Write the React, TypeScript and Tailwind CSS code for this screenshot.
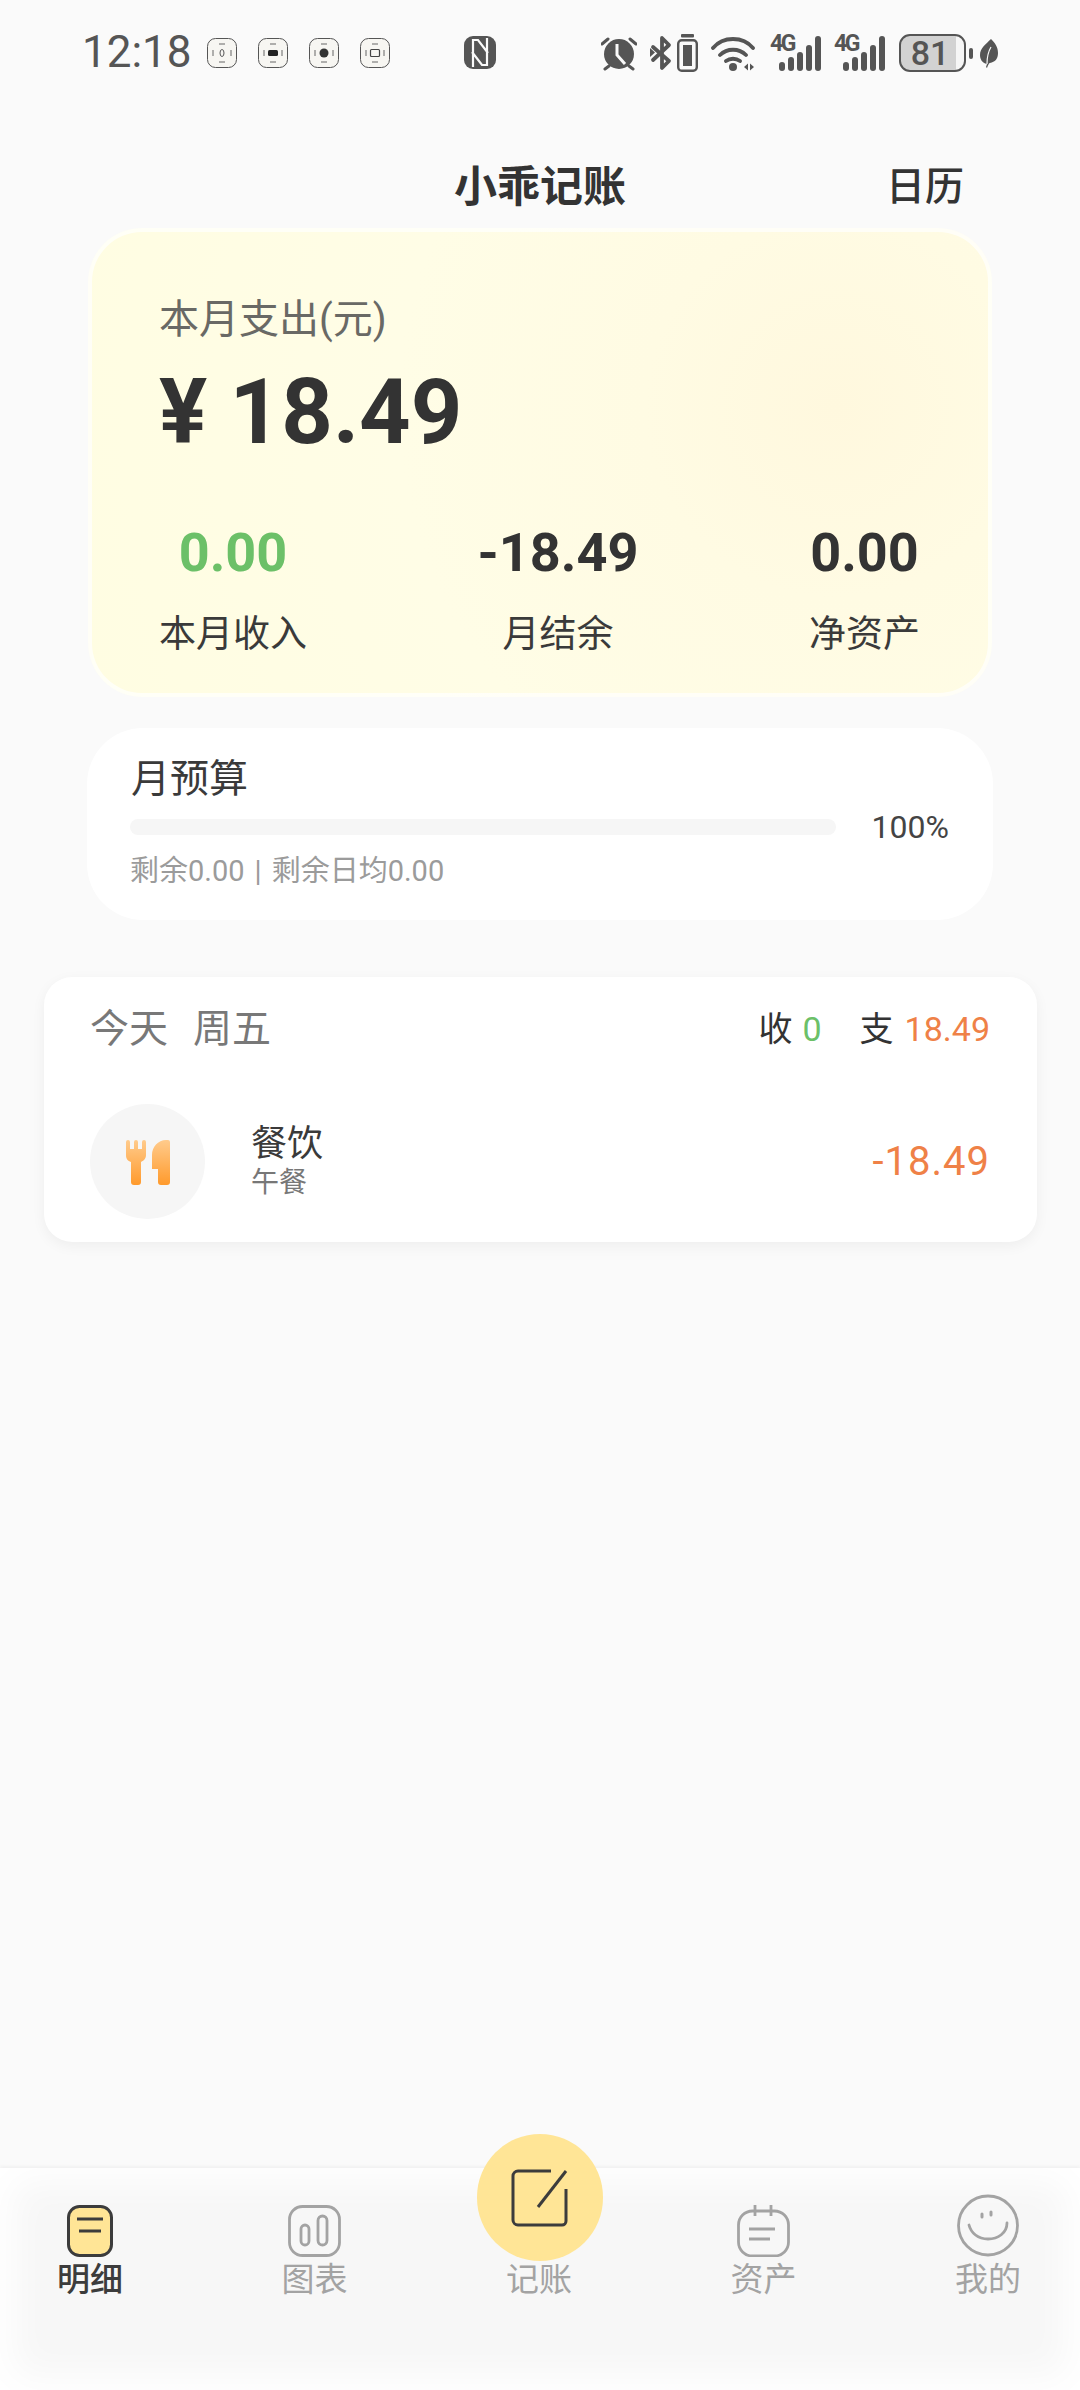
const CJK = "font-['Roboto','Noto_Sans_CJK_SC',sans-serif]";

const FocusBox = ({ glyph }: { glyph: React.ReactNode }) => (
  <svg width="30" height="30" viewBox="0 0 30 30">
    <rect x="0.5" y="0.5" width="29" height="29" rx="8" fill="#f7f6f2" stroke="#555" strokeWidth="1" />
    <path d="M12 6h6M12 24h6M6 12v6M24 12v6" stroke="#666" strokeWidth="1" />
    {glyph}
  </svg>
);

const Nfc = () => (
  <svg width="32" height="33" viewBox="0 0 32 33" className="ml-[74px]">
    <rect x="0" y="0" width="32" height="33" rx="9" fill="#555" />
    <path d="M9 31V4h5l10 13M23 2v27h-5L8 16" fill="none" stroke="#fafafa" strokeWidth="2.200" />
  </svg>
);

const Alarm = () => (
  <svg width="36" height="36" viewBox="0 0 36 36">
    <circle cx="18" cy="19" r="15" fill="#555" />
    <path d="M16 9v11l8 9" fill="none" stroke="#fafafa" strokeWidth="3" />
    <path d="M1 9l6-5M35 9l-6-5M4 34l4-3M32 34l-4-3" stroke="#555" strokeWidth="3" strokeLinecap="round" />
  </svg>
);

const BluetoothOff = () => (
  <svg width="22" height="36" viewBox="0 0 22 36">
    <path d="M3 12l16 14-7 7V3l7 7L3 25" fill="none" stroke="#555" strokeWidth="3.800" strokeLinejoin="round" strokeLinecap="round" />
    <path d="M0 13v9l5-4.500z" fill="#555" />
  </svg>
);

const VibrateBattery = () => (
  <svg width="21" height="38" viewBox="0 0 21 38">
    <rect x="4" y="0" width="13" height="3.500" rx="1" fill="#555" />
    <rect x="1.200" y="6.200" width="18.600" height="30.600" rx="3.500" fill="none" stroke="#555" strokeWidth="2.400" />
    <rect x="6" y="11" width="9" height="21" fill="#555" />
  </svg>
);

const Wifi = () => (
  <svg width="45" height="36" viewBox="0 0 45 36">
    <path d="M2 13C12 1 32 1 42 13M9 20c7-7 19-7 26 0M15 26c4-3 10-3 14 0" fill="none" stroke="#555" strokeWidth="3.800" strokeLinecap="round" />
    <circle cx="22" cy="32" r="4" fill="#555" />
    <path d="M33 32l4-3.500v7zM39 28.500l4 3.500-4 3.500z" fill="#555" />
  </svg>
);

const Signal = () => (
  <div className="relative w-[51px] h-[36px]">
    <span className="absolute left-0 top-[-3px] text-[23px] leading-[24px] font-bold text-[#555] tracking-[-2.500px] font-['Roboto',sans-serif]">4G</span>
    <div className="absolute inset-0 flex items-end justify-end gap-[3px]">
      <span className="w-[6px] h-[9px] rounded-full bg-[#555]" />
      <span className="w-[6px] h-[14px] rounded-full bg-[#555]" />
      <span className="w-[6px] h-[19px] rounded-full bg-[#555]" />
      <span className="w-[6px] h-[26px] rounded-full bg-[#555]" />
      <span className="w-[6px] h-[35px] rounded-full bg-[#555]" />
    </div>
  </div>
);

const Battery = () => (
  <div className="flex items-center">
    <div className="relative w-[67px] h-[38px] rounded-[11px] border-[2.5px] border-[#555] bg-[linear-gradient(90deg,#d2d2d2_0%,#d2d2d2_88%,#f6f6f6_88%)] flex items-center justify-center">
      <span className="text-[34px] leading-none font-medium text-[#555] font-['Roboto',sans-serif] pr-[5px]">81</span>
    </div>
    <span className="ml-[3px] w-[4px] h-[11px] rounded-full bg-[#555]" />
    <svg width="18" height="29" viewBox="0 0 18 29" className="ml-[7px]">
      <path d="M11 0c4 4 7 8 7 14 0 6-3 9-8 10-1 0-2 2-3 5l-1-1 1-3C2 24 0 20 0 16 0 9 6 5 11 0z" fill="#555" />
      <path d="M7 25c0-7 1-12 4-17" fill="none" stroke="#fafafa" strokeWidth="1.200" />
    </svg>
  </div>
);

const StatusBar = () => (
  <div className="h-[104px] pt-[36px] pl-[82px] pr-[82px] flex items-start text-[#555]">
    <span className="text-[44px] leading-[33px] font-['Roboto',sans-serif] mr-[15px]">12:18</span>
    <div className="flex items-center gap-[21px] mt-[2px]">
      <FocusBox glyph={<ellipse cx="15" cy="15" rx="2" ry="3.500" fill="none" stroke="#555" strokeWidth="1" />} />
      <FocusBox glyph={<rect x="10" y="12" width="10" height="6" rx="1.500" fill="#222" />} />
      <FocusBox glyph={<circle cx="15" cy="15" r="4.500" fill="#333" />} />
      <FocusBox glyph={<rect x="10.500" y="11.500" width="9" height="7" rx="1" fill="none" stroke="#444" strokeWidth="1.200" />} />
    </div>
    <Nfc />
    <div className="ml-auto flex items-center mt-[-2px] h-[38px]">
      <Alarm />
      <div className="ml-[13px]"><BluetoothOff /></div>
      <div className="ml-[5px]"><VibrateBattery /></div>
      <div className="ml-[13px]"><Wifi /></div>
      <div className="ml-[14px]"><Signal /></div>
      <div className="ml-[13px]"><Signal /></div>
      <div className="ml-[14px]"><Battery /></div>
    </div>
  </div>
);

const Stat = ({ value, label, color }: { value: string; label: string; color: string }) => (
  <div className="flex flex-col items-center">
    <span className={`text-[54px] leading-[60px] font-bold ${color}`}>{value}</span>
    <span className="mt-[30px] text-[37px] leading-[44px] text-[#3a3a3a]">{label}</span>
  </div>
);

const MonthCard = () => (
  <div className="mx-[88px] h-[469px] rounded-[54px] border-[4px] border-white/70 bg-[#fffde5] bg-[radial-gradient(circle_at_83%_38%,#fff8de_0%,#fffbe3_24%,#fffde6_55%,#fffde2_100%)] pl-[67px] pr-[68px] pt-[65px]">
    <div className="text-[40px] leading-[46px] text-[#696965]">本月支出(元)</div>
    <div className="mt-[20px] text-[90px] leading-[100px] font-bold text-[#333]">¥ 18.49</div>
    <div className="mt-[60px] flex justify-between">
      <Stat value="0.00" label="本月收入" color="text-[#6cc068]" />
      <Stat value="-18.49" label="月结余" color="text-[#333]" />
      <Stat value="0.00" label="净资产" color="text-[#333]" />
    </div>
  </div>
);

const BudgetCard = () => (
  <div className="mt-[31px] mx-[87px] h-[192px] rounded-[56px] bg-white pl-[44px] pr-[44px] pt-[28px]">
    <div className="text-[39px] leading-[46px] text-[#3a3a3a]">月预算</div>
    <div className="mt-[7px] flex items-center">
      <div className="ml-[-1px] w-[706px] h-[16px] rounded-full bg-[#f6f6f6]" />
      <span className="ml-[36px] text-[32px] leading-[36px] text-[#444]">100%</span>
    </div>
    <div className="ml-[-1px] mt-[8px] text-[29px] leading-[36px] text-[#9b9b9b]">
      <span>剩余0.00</span>
      <span className="mx-[10px]">|</span>
      <span>剩余日均0.00</span>
    </div>
  </div>
);

const ForkKnife = () => (
  <svg width="44" height="46" viewBox="0 0 44 46">
    <defs>
      <linearGradient id="foodGrad" x1="0" y1="0" x2="0" y2="1">
        <stop offset="0" stopColor="#ffcb8c" />
        <stop offset="1" stopColor="#ff9a2c" />
      </linearGradient>
    </defs>
    <path
      d="M0 3a2 2 0 0 1 4 0v7h4V3a2 2 0 0 1 4 0v7h4V3a2 2 0 0 1 4 0v13c0 4-3 6-5 7v20a3 3 0 0 1-3 3H8a3 3 0 0 1-3-3V23c-3-1-5-3-5-7z"
      fill="url(#foodGrad)"
    />
    <path
      d="M44 3v40a3 3 0 0 1-3 3h-6a3 3 0 0 1-3-3V30h-6V16C26 8 32 1 40 1h2a2 2 0 0 1 2 2z"
      fill="url(#foodGrad)"
    />
  </svg>
);

const TodayCard = () => (
  <div className="mt-[57px] ml-[44px] mr-[43px] h-[265px] rounded-[28px] bg-white shadow-[0_4px_14px_rgba(0,0,0,0.05)] pl-[46px] pr-[47px] pt-[28px]">
    <div className="flex items-center justify-between h-[48px]">
      <div className="text-[39px] leading-[48px] text-[#787878] flex gap-[25px]">
        <span>今天</span>
        <span>周五</span>
      </div>
      <div className="flex items-center text-[34px] leading-[44px] text-[#333]">
        <span>收</span>
        <span className="ml-[10px] text-[#6cc068]">0</span>
        <span className="ml-[38px]">支</span>
        <span className="ml-[11px] text-[#ef8147]">18.49</span>
      </div>
    </div>
    <div className="mt-[51px] flex items-center">
      <div className="w-[115px] h-[115px] rounded-full bg-[#f6f6f6] flex items-center justify-center">
        <ForkKnife />
      </div>
      <div className="ml-[46px] flex flex-col mt-[-2px]">
        <span className="text-[36px] leading-[44px] text-[#3a3a3a]">餐饮</span>
        <span className="text-[28px] leading-[34px] text-[#777]">午餐</span>
      </div>
      <span className="ml-auto text-[40px] leading-[46px] tracking-[1px] text-[#ef8147]">-18.49</span>
    </div>
  </div>
);

const TabIcon = ({ name }: { name: string }) => {
  if (name === "明细")
    return (
      <svg width="46" height="52" viewBox="0 0 46 52">
        <rect x="1.500" y="1.500" width="43" height="49" rx="11" fill="#ffe596" stroke="#3c3c3c" strokeWidth="3" />
        <path d="M10 14h26M12 26h22" stroke="#3c3c3c" strokeWidth="3" />
      </svg>
    );
  if (name === "图表")
    return (
      <svg width="53" height="52" viewBox="0 0 53 52">
        <rect x="1.500" y="1.500" width="50" height="49" rx="13" fill="none" stroke="#a3a3a3" strokeWidth="2.800" />
        <rect x="13" y="20" width="8" height="20" rx="4" fill="none" stroke="#a3a3a3" strokeWidth="2.800" />
        <rect x="30" y="11" width="9" height="29" rx="4.500" fill="none" stroke="#a3a3a3" strokeWidth="2.800" />
      </svg>
    );
  if (name === "资产")
    return (
      <svg width="53" height="52" viewBox="0 0 53 52">
        <rect x="1.500" y="6" width="50" height="45" rx="14" fill="none" stroke="#a3a3a3" strokeWidth="2.800" />
        <path d="M18 0v11M34 0v11M12 24h26M12 34h21" stroke="#a3a3a3" strokeWidth="2.800" />
      </svg>
    );
  if (name === "我的")
    return (
      <svg width="62" height="63" viewBox="0 0 62 63" className="mt-[-11px]">
        <circle cx="31" cy="31.500" r="29.500" fill="none" stroke="#a3a3a3" strokeWidth="2.800" />
        <path d="M12 31c2 8 9 14 19 14s19-6 19-16" fill="none" stroke="#a3a3a3" strokeWidth="2.800" strokeLinecap="round" />
        <path d="M25 20v3M34 18v3" stroke="#a3a3a3" strokeWidth="3" strokeLinecap="round" />
      </svg>
    );
  return <div className="w-[53px] h-[52px]" />;
};

const Tab = ({ name, active }: { name: string; active?: boolean }) => (
  <div className="w-[64px] flex flex-col items-center justify-end h-[99px]">
    <TabIcon name={name} />
    <span className={`mt-[6px] text-[33px] leading-[34px] whitespace-nowrap ${active ? "font-medium text-[#3c3c3c]" : "text-[#a3a3a3]"}`}>
      {name}
    </span>
  </div>
);

const TabBar = () => (
  <div className="relative mt-auto h-[222px] pl-[58px] pr-[60px] pt-[30px] flex justify-between items-start bg-[#f7f7f7] shadow-[0_-2px_3px_rgba(0,0,0,0.04),inset_0_0_36px_14px_#ffffff]">
    <Tab name="明细" active />
    <Tab name="图表" />
    <Tab name="记账" />
    <Tab name="资产" />
    <Tab name="我的" />
    <div className="absolute left-[477px] top-[-34px] w-[126px] h-[127px] rounded-full bg-[#ffe596] flex items-center justify-center">
      <svg width="58" height="58" viewBox="0 0 58 58">
        <path d="M40 2H7a5 5 0 0 0-5 5v44a5 5 0 0 0 5 5h44a4 4 0 0 0 4-4V20" fill="none" stroke="#3c3c3c" strokeWidth="3" />
        <path d="M55 2L27 38" fill="none" stroke="#3c3c3c" strokeWidth="3" />
      </svg>
    </div>
  </div>
);

export default function App() {
  return (
    <div className={`w-[1080px] h-[2390px] bg-[#fafafa] flex flex-col overflow-hidden ${CJK}`}>
      <StatusBar />
      <div className="h-[124px] pt-[42px] flex items-center justify-between pl-[454px] pr-[116px]">
        <span className="text-[43px] leading-[52px] font-bold text-[#333]">小乖记账</span>
        <span className="text-[39px] leading-[48px] font-medium text-[#333]">日历</span>
      </div>
      <MonthCard />
      <BudgetCard />
      <TodayCard />
      <TabBar />
    </div>
  );
}
